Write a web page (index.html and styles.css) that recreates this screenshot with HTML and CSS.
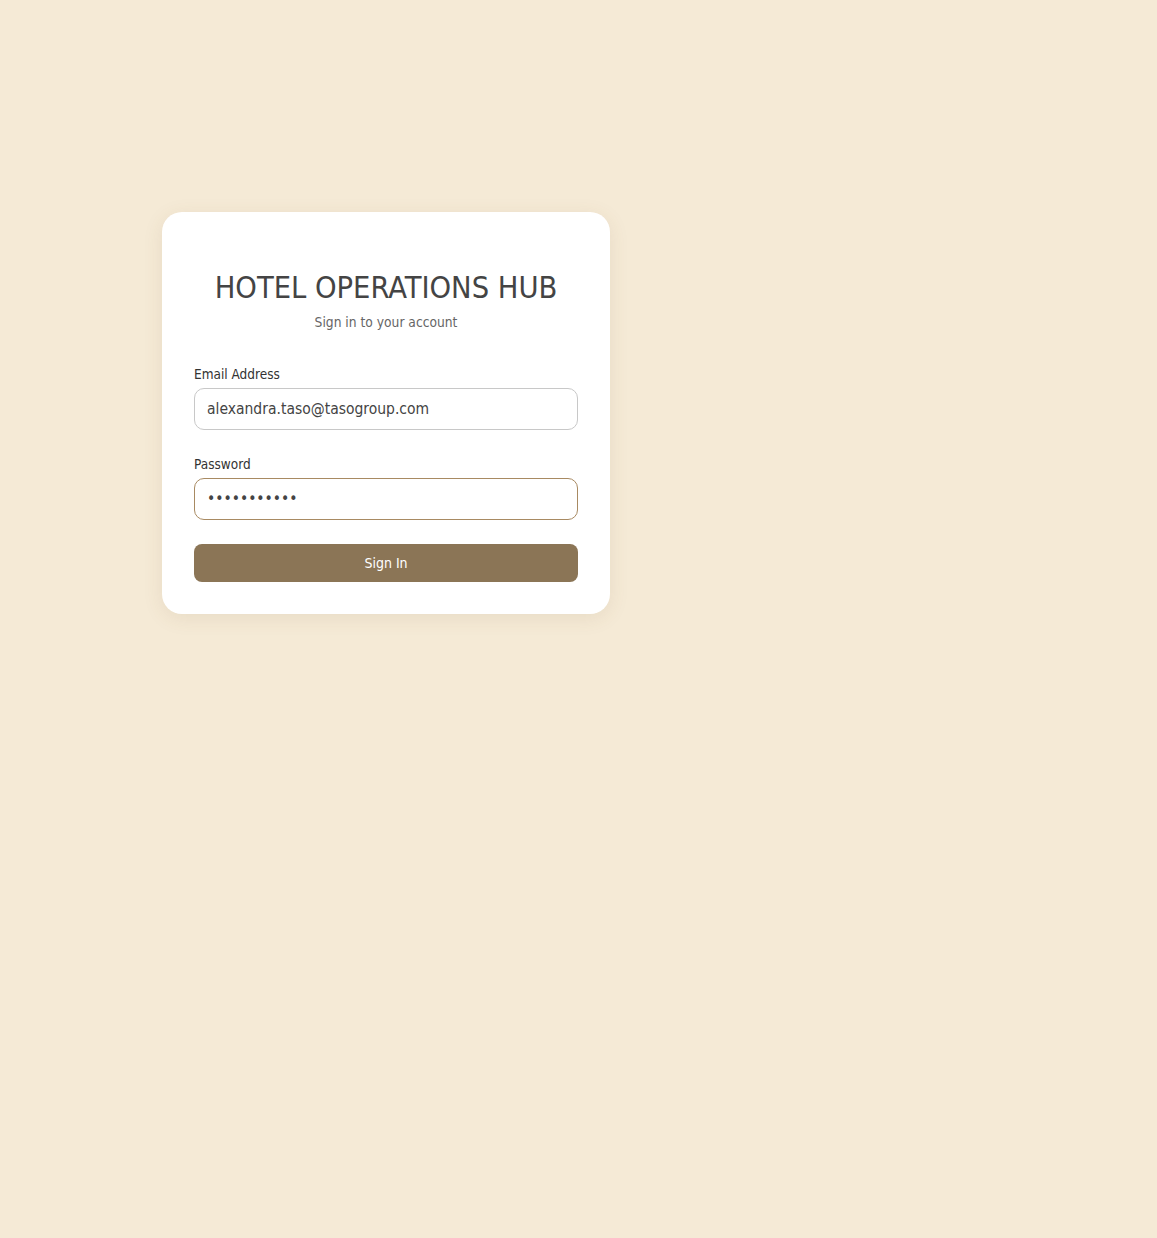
FILE: index.html
```html
<!DOCTYPE html>
<html>
<head>
<meta charset="utf-8">
<link rel="stylesheet" href="styles.css">
</head>
<body>
<div class="page">
  <div class="card">
    <h1 class="title">HOTEL OPERATIONS HUB</h1>
    <p class="subtitle">Sign in to your account</p>
    <form class="form">
      <div class="field">
        <label class="label">Email Address</label>
        <input class="input" type="email" value="alexandra.taso@tasogroup.com">
      </div>
      <div class="field field-last">
        <label class="label">Password</label>
        <input class="input input-focus" type="password" value="password123">
      </div>
      <button class="btn" type="button">Sign In</button>
    </form>
  </div>
</div>
</body>
</html>
```

FILE: styles.css
```css
* { box-sizing: border-box; }
html, body { margin: 0; padding: 0; }
body {
  background: #f5ead6;
  font-family: "DejaVu Sans Condensed", "DejaVu Sans", sans-serif;
  min-height: 1238px;
}
.page {
  padding: 212px 0 0 162px;
}
.card {
  width: 448px;
  background: #ffffff;
  border-radius: 20px;
  box-shadow: 0 4px 20px rgba(120, 90, 50, 0.10);
  padding: 58px 32px 32px;
}
.title {
  margin: 0;
  text-align: center;
  font-weight: normal;
  font-size: 30.5px;
  line-height: 36px;
  color: #444444;
}
.subtitle {
  margin: 7px 0 0;
  text-align: center;
  font-size: 13.7px;
  line-height: 18px;
  color: #666666;
}
.form {
  margin-top: 34px;
  display: flex;
  flex-direction: column;
}
.field {
  display: flex;
  flex-direction: column;
  margin-bottom: 25px;
}
.field-last { margin-bottom: 24px; }
.label {
  font-size: 13.5px;
  line-height: 18px;
  color: #333333;
  margin-bottom: 5px;
}
.input {
  height: 42px;
  border: 1px solid #c8c8c8;
  border-radius: 10px;
  padding: 0 12px;
  font-family: inherit;
  font-size: 15.5px;
  color: #444444;
  background: #ffffff;
  outline: none;
}
.input-focus { border-color: #a88a62; }
.btn {
  height: 38px;
  border: none;
  border-radius: 8px;
  background: #8b7556;
  color: #ffffff;
  font-family: inherit;
  font-size: 14px;
}
```
